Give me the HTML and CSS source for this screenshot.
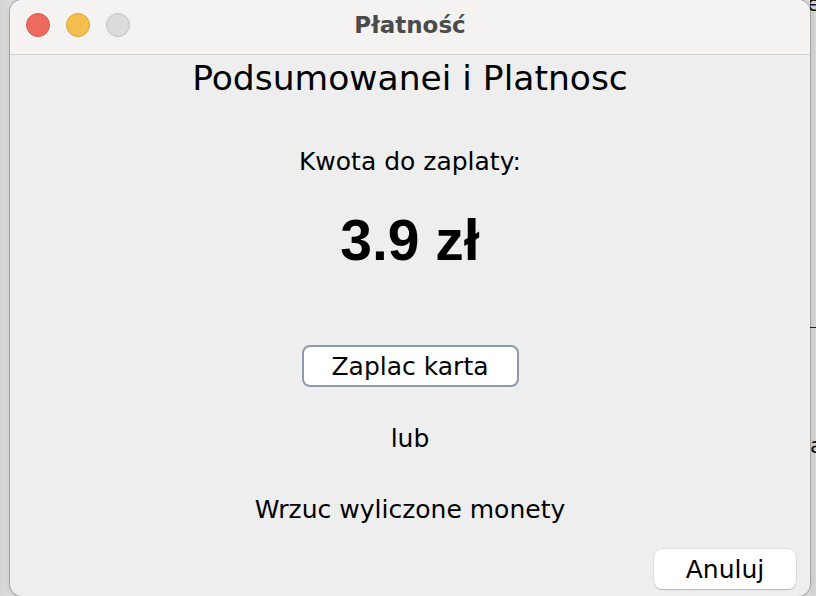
FILE: index.html
```html
<!DOCTYPE html>
<html lang="pl">
<head>
<meta charset="utf-8">
<title>Płatność</title>
<link rel="stylesheet" href="styles.css">
</head>
<body>
<div class="desktop">
  <div class="backdrop">
    <span class="bg-e">e</span>
    <span class="bg-line"></span>
    <span class="bg-a">a</span>
  </div>
  <div class="window">
    <div class="titlebar">
      <div class="lights">
        <span class="light red"></span>
        <span class="light yellow"></span>
        <span class="light gray"></span>
      </div>
      <div class="title">Płatność</div>
    </div>
    <div class="content">
      <h1 class="heading">Podsumowanei i Platnosc</h1>
      <p class="label">Kwota do zaplaty:</p>
      <p class="amount">3.9 zł</p>
      <button class="pay-btn">Zaplac karta</button>
      <p class="or">lub</p>
      <p class="coins">Wrzuc wyliczone monety</p>
      <div class="footer">
        <button class="cancel-btn">Anuluj</button>
      </div>
    </div>
  </div>
</div>
</body>
</html>
```

FILE: styles.css
```css
html, body {
  margin: 0;
  padding: 0;
}
body {
  width: 816px;
  height: 596px;
  overflow: hidden;
  background: #dadada;
  font-family: "DejaVu Sans", sans-serif;
}
.desktop {
  position: relative;
  width: 816px;
  height: 596px;
  padding-left: 10px;
  box-sizing: border-box;
  background: linear-gradient(90deg, #d4d4d4 0, #dedede 10px, #dedede 810px, #d6d6d6 811px);
}
.backdrop {
  position: absolute;
  left: 810px;
  top: 0;
  width: 6px;
  height: 596px;
  overflow: hidden;
}
.bg-e {
  position: absolute;
  left: -3px;
  top: -9px;
  font-size: 22px;
  color: #111;
}
.bg-line {
  position: absolute;
  left: 0;
  top: 327px;
  width: 6px;
  height: 1px;
  background: #222;
}
.bg-a {
  position: absolute;
  left: 0;
  top: 433px;
  font-size: 22px;
  color: #111;
}
.window {
  position: relative;
  width: 800px;
  height: 596px;
  border-radius: 12px;
  background: #eeeeee;
  box-shadow: 0 0 0 1px rgba(0, 0, 0, 0.18), 0 0 6px rgba(0, 0, 0, 0.18);
  overflow: hidden;
  display: flex;
  flex-direction: column;
}
.titlebar {
  position: relative;
  height: 54px;
  flex: none;
  background: #f4f3f1;
  border-bottom: 1px solid #d2d2d2;
  display: flex;
  align-items: center;
  justify-content: center;
}
.lights {
  position: absolute;
  left: 16px;
  top: 13px;
  display: flex;
  gap: 16px;
}
.light {
  width: 24px;
  height: 24px;
  border-radius: 50%;
  box-sizing: border-box;
}
.red {
  background: #ee6a5f;
  border: 1px solid #d8574d;
}
.yellow {
  background: #f5bf4f;
  border: 1px solid #d9a23a;
}
.gray {
  background: #dcdbda;
  border: 1px solid #c4c3c2;
}
.title {
  font-weight: bold;
  font-size: 23px;
  color: #4b4b4b;
  margin-top: -4px;
}
.content {
  flex: 1;
  display: flex;
  flex-direction: column;
  align-items: center;
  padding-top: 6px;
  color: #000;
}
.heading {
  margin: 0;
  font-size: 34.5px;
  font-weight: normal;
  line-height: 34px;
}
.label {
  margin: 54px 0 0;
  font-size: 25px;
  line-height: 25px;
}
.amount {
  margin: 38px 0 0;
  font-family: "Liberation Sans", Arial, sans-serif;
  font-weight: bold;
  font-size: 57px;
  line-height: 57px;
}
.pay-btn {
  margin-top: 76px;
  width: 217px;
  height: 42px;
  box-sizing: border-box;
  background: #ffffff;
  border: 2px solid #8d9aae;
  border-radius: 8px;
  font-family: "DejaVu Sans", sans-serif;
  font-size: 25px;
  color: #000;
  padding: 0;
}
.or {
  margin: 39px 0 0;
  font-size: 25px;
  line-height: 25px;
}
.coins {
  margin: 46px 0 0;
  font-size: 25px;
  line-height: 25px;
}
.footer {
  align-self: stretch;
  display: flex;
  justify-content: flex-end;
  padding-right: 14px;
  margin-top: 27px;
}
.cancel-btn {
  width: 142px;
  height: 40px;
  background: #ffffff;
  border: none;
  border-radius: 8px;
  box-shadow: 0 0 0 0.5px rgba(0, 0, 0, 0.12), 0 1px 1px rgba(0, 0, 0, 0.18);
  font-family: "DejaVu Sans", sans-serif;
  font-size: 25px;
  color: #000;
  padding: 0;
}
```
